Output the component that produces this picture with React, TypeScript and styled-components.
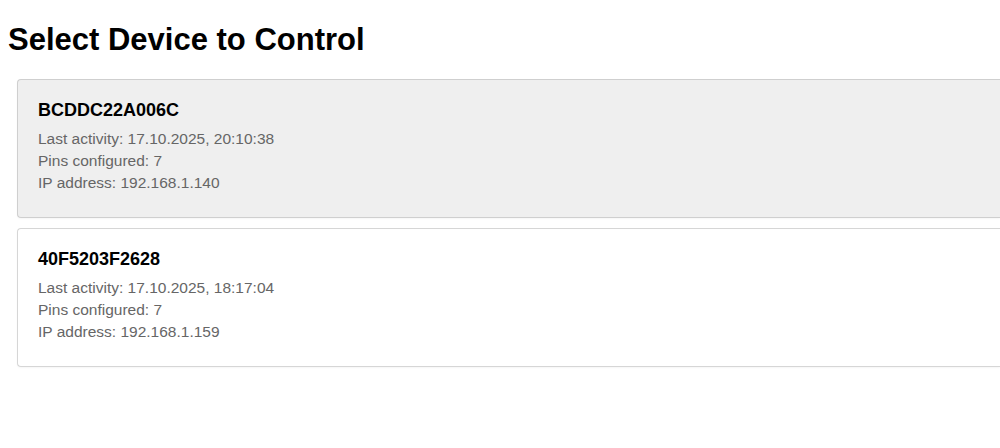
import React from 'react';
import styled, { createGlobalStyle } from 'styled-components';

interface Device {
  id: string;
  lastActivity: string;
  pins: number;
  ip: string;
}

const devices: Device[] = [
  { id: 'BCDDC22A006C', lastActivity: '17.10.2025, 20:10:38', pins: 7, ip: '192.168.1.140' },
  { id: '40F5203F2628', lastActivity: '17.10.2025, 18:17:04', pins: 7, ip: '192.168.1.159' },
];

const GlobalStyle = createGlobalStyle`
  html, body {
    margin: 0;
    background: #ffffff;
    overflow: hidden;
  }
  body {
    font-family: "Liberation Sans", Arial, sans-serif;
    color: #000;
  }
`;

const Page = styled.main`
  padding: 21px 0 21px 8px;
`;

const Title = styled.h1`
  margin: 0 0 21px;
  padding-top: 1px;
  font-size: 31px;
  line-height: 36px;
  font-weight: bold;
`;

const DeviceList = styled.div`
  display: flex;
  flex-direction: column;
  gap: 10px;
  padding-left: 9px;
`;

const DeviceCard = styled.div<{ $selected?: boolean }>`
  box-sizing: border-box;
  padding: 20px 20px 22px;
  border: 1px solid ${({ $selected }) => ($selected ? '#cfcfcf' : '#d6d6d6')};
  border-right: none;
  border-radius: 4px 0 0 4px;
  background: ${({ $selected }) => ($selected ? '#efefef' : '#ffffff')};
  box-shadow: 0 1px 2px rgba(0, 0, 0, 0.04);
  cursor: pointer;
`;

const DeviceName = styled.h3`
  margin: 0 0 8px;
  font-size: 18px;
  line-height: 20px;
  font-weight: bold;
  color: #000;
`;

const DetailLine = styled.p`
  margin: 0;
  font-size: 15.5px;
  line-height: 22px;
  color: #666666;
`;

const DeviceInfo = styled.div`
  padding-bottom: 1px;
`;

export default function App(): JSX.Element {
  return (
    <>
      <GlobalStyle />
      <Page>
        <Title>Select Device to Control</Title>
        <DeviceList>
          {devices.map((d, i) => (
            <DeviceCard key={d.id} $selected={i === 0}>
              <DeviceName>{d.id}</DeviceName>
              <DeviceInfo>
                <DetailLine>Last activity: {d.lastActivity}</DetailLine>
                <DetailLine>Pins configured: {d.pins}</DetailLine>
                <DetailLine>IP address: {d.ip}</DetailLine>
              </DeviceInfo>
            </DeviceCard>
          ))}
        </DeviceList>
      </Page>
    </>
  );
}
